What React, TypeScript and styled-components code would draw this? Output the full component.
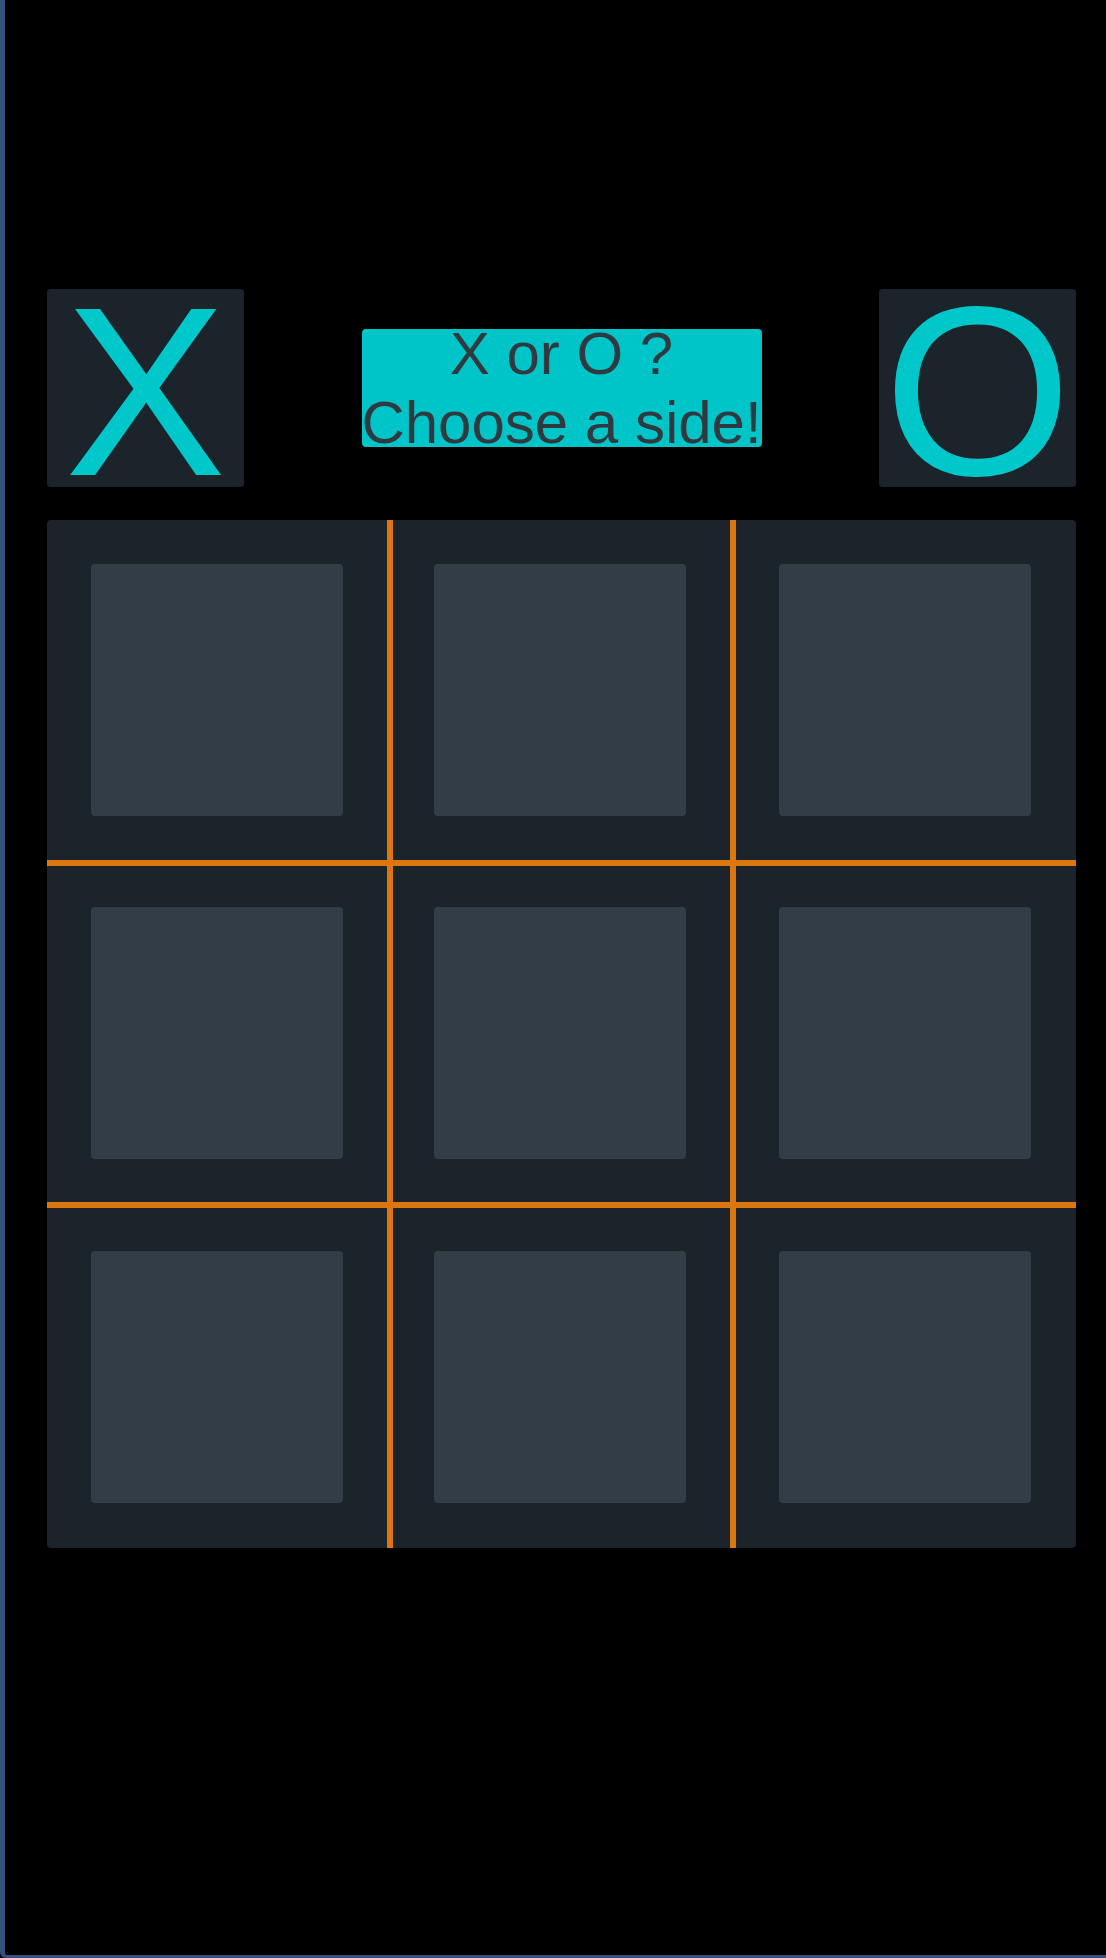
import React from "react";
import styled, { createGlobalStyle } from "styled-components";

const Global = createGlobalStyle`
  html, body { margin: 0; padding: 0; background: #000; }
  body { font-family: "Liberation Sans", Arial, sans-serif; }
  #root { min-height: 100vh; }
`;

const Page = styled.div`
  box-sizing: border-box;
  min-height: 1958px;
  background: #000;
  border-left: 5px solid #34507c;
  border-bottom: 3px solid #34507c;
  border-bottom-left-radius: 6px;
  padding: 289px 30px 0 42px;
  display: flex;
  flex-direction: column;
  gap: 33px;
`;

const Header = styled.div`
  width: 1029px;
  height: 198px;
  display: flex;
  align-items: center;
  justify-content: space-between;
`;

const SideButton = styled.button`
  box-sizing: border-box;
  width: 197px;
  height: 198px;
  padding: 6px 0 0;
  border: none;
  border-radius: 4px;
  background: #1b232b;
  color: #00c7c9;
  font-family: "Liberation Sans", Arial, sans-serif;
  font-size: 242px;
  line-height: 1;
  display: flex;
  align-items: center;
  justify-content: center;
  overflow: visible;
  cursor: pointer;
`;

const Caption = styled.div`
  width: 400px;
  height: 118px;
  border-radius: 4px;
  background: #00c5c8;
  color: #2e3a3f;
  font-size: 60px;
  line-height: 69px;
  text-align: center;
  display: flex;
  flex-direction: column;
  align-items: center;
  justify-content: center;
  white-space: nowrap;
`;

const Board = styled.div`
  width: 1029px;
  height: 1028px;
  border-radius: 4px;
  background: #1b232b;
  display: grid;
  grid-template-columns: 343px 343px 343px;
  grid-template-rows: 343px 342px 343px;
`;

const Cell = styled.div<{ $right: boolean; $bottom: boolean }>`
  box-sizing: border-box;
  display: flex;
  align-items: center;
  justify-content: center;
  margin-right: ${(p) => (p.$right ? "-3px" : "0")};
  margin-bottom: ${(p) => (p.$bottom ? "-3px" : "0")};
  border-right: ${(p) => (p.$right ? "6px solid #dc760e" : "none")};
  border-bottom: ${(p) => (p.$bottom ? "6px solid #dc760e" : "none")};
  position: relative;
  z-index: 1;
`;

const Square = styled.div`
  width: 252px;
  height: 252px;
  border-radius: 4px;
  background: #333d47;
`;

export default function App() {
  const cells = Array.from({ length: 9 }, (_, i) => i);
  return (
    <>
      <Global />
      <Page>
        <Header>
          <SideButton>X</SideButton>
          <Caption>
            <span>X or O ?</span>
            <span>Choose a side!</span>
          </Caption>
          <SideButton>O</SideButton>
        </Header>
        <Board>
          {cells.map((i) => (
            <Cell key={i} $right={i % 3 !== 2} $bottom={i < 6}>
              <Square />
            </Cell>
          ))}
        </Board>
      </Page>
    </>
  );
}
